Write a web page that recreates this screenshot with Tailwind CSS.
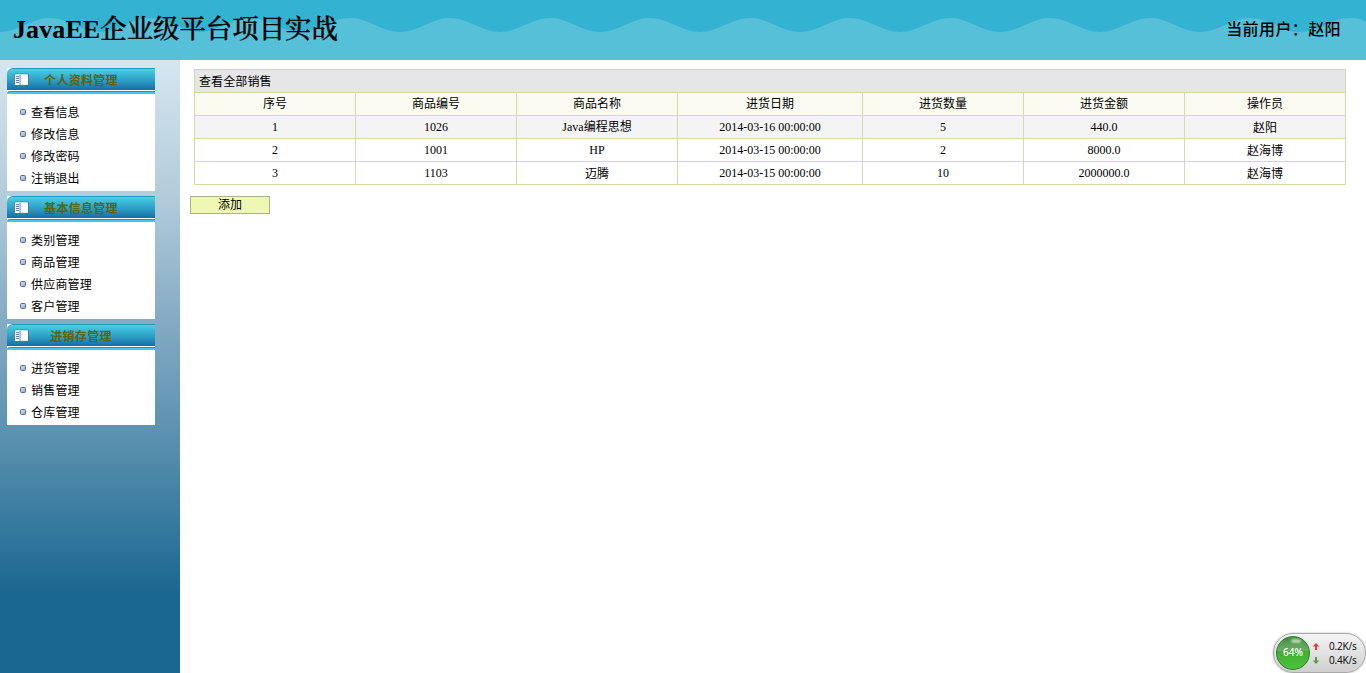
<!DOCTYPE html>
<html lang="zh-CN">
<head>
<meta charset="utf-8">
<title>JavaEE企业级平台项目实战</title>
<script src="https://cdn.jsdelivr.net/npm/@tailwindcss/browser@4"></script>
</head>
<body class="flex h-screen flex-col overflow-hidden bg-white font-['Liberation_Serif','Noto_Sans_CJK_SC',serif] text-xs text-black">
<svg class="absolute size-0">
  <defs>
    <linearGradient id="win" x1="0" y1="0" x2="1" y2="1"><stop offset="0" stop-color="#3f8fd8"/><stop offset="1" stop-color="#3a6fc0"/></linearGradient>
    <symbol id="panel" viewBox="0 0 15 13">
      <rect x="0.5" y="1" width="14" height="11.5" fill="#fff" stroke="url(#win)"/>
      <path d="M1 1.5h13" stroke="#b9dcf5"/>
      <path d="M6 2v10" stroke="#4f8fd4"/>
      <path d="M2 3.5h3M2 5.5h3M2 7.5h3M2 9.5h3" stroke="#6f7aa0"/>
      <path d="M7 11.5h7" stroke="#dfe8f2"/>
    </symbol>
    <linearGradient id="dotfill" x1="0" y1="0" x2="1" y2="1"><stop offset="0" stop-color="#dbe6fa"/><stop offset="1" stop-color="#86a4dc"/></linearGradient>
    <symbol id="dot" viewBox="0 0 6 6">
      <rect x="0.5" y="0.5" width="5" height="5" rx="1" fill="url(#dotfill)" stroke="#56688c"/>
    </symbol>
  </defs>
</svg>

<header class="relative h-[60px] shrink-0 bg-[#33b2d1]">
  <svg class="absolute inset-0 h-[60px] w-full">
    <defs>
      <pattern id="wave" width="100" height="60" patternUnits="userSpaceOnUse">
        <path d="M0 32C18 32 32 18 50 18S82 32 100 32V60H0Z" fill="#56c0d9"/>
      </pattern>
    </defs>
    <rect width="100%" height="60" fill="url(#wave)"/>
  </svg>
  <div class="relative flex h-full items-center justify-between pl-[13px] pr-[25px]">
    <h1 class="h-full whitespace-nowrap text-[26px] leading-[54px]"><span class="font-bold tracking-[0.1px]">JavaEE</span><span class="font-['Noto_Serif_CJK_SC','Noto_Sans_CJK_SC',serif] text-[26.4px] font-medium [-webkit-text-stroke:0.3px_#000]">企业级平台项目实战</span></h1>
    <p class="text-base font-medium leading-[60px] tracking-[0.4px]">当前用户：赵阳</p>
  </div>
</header>

<div class="flex min-h-0 flex-1">
  <aside class="flex w-[180px] shrink-0 flex-col gap-[5px] bg-[linear-gradient(#d5e6f0_0px,#b3ccdb_135px,#86acc5_255px,#5b91b0_375px,#1a6791_535px,#1a6791_100%)] pl-[7px] pt-2">
    <section class="w-[148px] bg-white pb-px">
      <div class="flex h-[22px] items-center rounded-tl-md border-t border-[#2a98b8] bg-[linear-gradient(#48cfe8,#2fa3c9_50%,#166ea6)] pl-[7px]">
        <svg class="h-[13px] w-[15px]"><use href="#panel"/></svg>
        <h2 class="ml-[-15px] flex-1 pr-[7px] pt-[3px] text-center text-xs font-bold tracking-[0.3px] text-[#5b6409]">个人资料管理</h2>
      </div>
      <div class="mt-px h-[3px] rounded-tl-sm border-t border-[#2393bd] bg-[#45c6e0]"></div>
      <ul class="pt-2 tracking-[0.2px]">
        <li class="flex h-[22px] items-center gap-[5px] pl-[13px]"><svg class="-mt-0.5 size-1.5"><use href="#dot"/></svg>查看信息</li>
        <li class="flex h-[22px] items-center gap-[5px] pl-[13px]"><svg class="-mt-0.5 size-1.5"><use href="#dot"/></svg>修改信息</li>
        <li class="flex h-[22px] items-center gap-[5px] pl-[13px]"><svg class="-mt-0.5 size-1.5"><use href="#dot"/></svg>修改密码</li>
        <li class="flex h-[22px] items-center gap-[5px] pl-[13px]"><svg class="-mt-0.5 size-1.5"><use href="#dot"/></svg>注销退出</li>
      </ul>
    </section>
    <section class="w-[148px] bg-white pb-px">
      <div class="flex h-[22px] items-center rounded-tl-md border-t border-[#2a98b8] bg-[linear-gradient(#48cfe8,#2fa3c9_50%,#166ea6)] pl-[7px]">
        <svg class="h-[13px] w-[15px]"><use href="#panel"/></svg>
        <h2 class="ml-[-15px] flex-1 pr-[7px] pt-[3px] text-center text-xs font-bold tracking-[0.3px] text-[#5b6409]">基本信息管理</h2>
      </div>
      <div class="mt-px h-[3px] rounded-tl-sm border-t border-[#2393bd] bg-[#45c6e0]"></div>
      <ul class="pt-2 tracking-[0.2px]">
        <li class="flex h-[22px] items-center gap-[5px] pl-[13px]"><svg class="-mt-0.5 size-1.5"><use href="#dot"/></svg>类别管理</li>
        <li class="flex h-[22px] items-center gap-[5px] pl-[13px]"><svg class="-mt-0.5 size-1.5"><use href="#dot"/></svg>商品管理</li>
        <li class="flex h-[22px] items-center gap-[5px] pl-[13px]"><svg class="-mt-0.5 size-1.5"><use href="#dot"/></svg>供应商管理</li>
        <li class="flex h-[22px] items-center gap-[5px] pl-[13px]"><svg class="-mt-0.5 size-1.5"><use href="#dot"/></svg>客户管理</li>
      </ul>
    </section>
    <section class="w-[148px] bg-white pb-px">
      <div class="flex h-[22px] items-center rounded-tl-md border-t border-[#2a98b8] bg-[linear-gradient(#48cfe8,#2fa3c9_50%,#166ea6)] pl-[7px]">
        <svg class="h-[13px] w-[15px]"><use href="#panel"/></svg>
        <h2 class="ml-[-15px] flex-1 pr-[7px] pt-[3px] text-center text-xs font-bold tracking-[0.3px] text-[#5b6409]">进销存管理</h2>
      </div>
      <div class="mt-px h-[3px] rounded-tl-sm border-t border-[#2393bd] bg-[#45c6e0]"></div>
      <ul class="pt-2 tracking-[0.2px]">
        <li class="flex h-[22px] items-center gap-[5px] pl-[13px]"><svg class="-mt-0.5 size-1.5"><use href="#dot"/></svg>进货管理</li>
        <li class="flex h-[22px] items-center gap-[5px] pl-[13px]"><svg class="-mt-0.5 size-1.5"><use href="#dot"/></svg>销售管理</li>
        <li class="flex h-[22px] items-center gap-[5px] pl-[13px]"><svg class="-mt-0.5 size-1.5"><use href="#dot"/></svg>仓库管理</li>
      </ul>
    </section>
  </aside>

  <main class="flex-1 pl-[10px] pt-[9px]">
    <div class="ml-1 grid w-[1152px] grid-cols-[160px_160px_160px_184px_160px_160px_160px] gap-px bg-[#d3dba9] p-px text-center leading-[22px] *:h-[22px]">
      <div class="col-span-7 bg-[#e6e6e6] pl-1 text-left leading-6 tracking-[0.1px]">查看全部销售</div>
      <div class="bg-[#fafaf0]">序号</div><div class="bg-[#fafaf0]">商品编号</div><div class="bg-[#fafaf0]">商品名称</div><div class="bg-[#fafaf0]">进货日期</div><div class="bg-[#fafaf0]">进货数量</div><div class="bg-[#fafaf0]">进货金额</div><div class="bg-[#fafaf0]">操作员</div>
      <div class="bg-[#f4f4f4]">1</div><div class="bg-[#f4f4f4]">1026</div><div class="bg-[#f4f4f4]">Java编程思想</div><div class="bg-[#f4f4f4]">2014-03-16 00:00:00</div><div class="bg-[#f4f4f4]">5</div><div class="bg-[#f4f4f4]">440.0</div><div class="bg-[#f4f4f4] leading-6">赵阳</div>
      <div class="bg-white">2</div><div class="bg-white">1001</div><div class="bg-white">HP</div><div class="bg-white">2014-03-15 00:00:00</div><div class="bg-white">2</div><div class="bg-white">8000.0</div><div class="bg-white leading-6">赵海博</div>
      <div class="bg-white">3</div><div class="bg-white">1103</div><div class="bg-white leading-6">迈腾</div><div class="bg-white">2014-03-15 00:00:00</div><div class="bg-white">10</div><div class="bg-white">2000000.0</div><div class="bg-white leading-6">赵海博</div>
    </div>
    <button class="mt-[11px] block h-[18px] w-20 border border-[#a9b08a] bg-[#eff8b3] text-center text-xs leading-4">添加</button>
  </main>
</div>

<div class="absolute left-[1273px] top-[633px] flex h-10 w-[93px] items-center rounded-[20px] border border-[#a8a8a8] bg-[linear-gradient(#f4f4f4,#dedede_60%,#cfcfcf)] pl-0.5 font-['Open_Sans','Noto_Sans',sans-serif] shadow-[0_0_2px_#00000055]">
  <div class="relative flex size-[34px] shrink-0 items-center justify-center overflow-hidden rounded-full border border-[#2e7d2c] bg-[linear-gradient(#3d8f3a,#6fae69_42%,#3fb02f_43%,#4cc23a)] text-[10px] font-medium text-white">
    <span class="absolute left-[14px] top-0.5 h-1 w-2.5 rounded-full bg-white/60 blur-[1px]"></span>
    <span class="relative font-['Noto_Sans']">64%</span>
  </div>
  <div class="ml-[2px] flex flex-col text-[10px] font-medium leading-[14px] text-black">
    <div class="flex items-center gap-[9px]"><svg class="h-[7px] w-[8px]" viewBox="0 0 8 7"><path d="M4 0L7.3 3.4H5V7H3V3.4H.7Z" fill="#e23d3d"/></svg><span class="tracking-[-0.15px]">0.2K/s</span></div>
    <div class="flex items-center gap-[9px]"><svg class="h-[7px] w-[8px]" viewBox="0 0 8 7"><path d="M4 7L7.3 3.6H5V0H3V3.6H.7Z" fill="#5a9a45"/></svg><span class="tracking-[-0.15px]">0.4K/s</span></div>
  </div>
</div>
</body>
</html>
